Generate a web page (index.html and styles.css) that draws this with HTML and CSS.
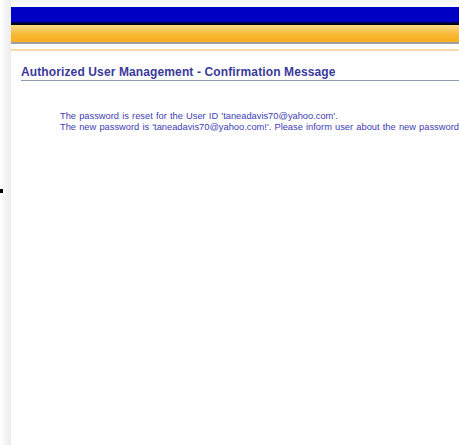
FILE: index.html
```html
<!DOCTYPE html>
<html>
<head>
<meta charset="utf-8">
<link rel="stylesheet" href="styles.css">
</head>
<body>
<div class="shade"></div>
<div class="frame">
  <div class="topgap"></div>
  <div class="bluebar"></div>
  <div class="blackline"></div>
  <div class="goldbar"></div>
  <div class="greyline"></div>
  <div class="paleline"></div>
  <div class="content">
    <h1 class="title">Authorized User Management - Confirmation Message</h1>
    <div class="message">
      <p>The password is reset for the User ID 'taneadavis70@yahoo.com'.</p>
      <p>The new password is 'taneadavis70@yahoo.com!'. Please inform user about the new password.</p>
    </div>
  </div>
</div>
<span class="mark"></span>
</body>
</html>
```
FILE: styles.css
```css
html, body {
  margin: 0;
  padding: 0;
  background: #fff;
  overflow: hidden;
  height: 445px;
}
body {
  display: flex;
  position: relative;
  font-family: "Liberation Sans", Arial, sans-serif;
}
.shade {
  width: 11px;
  flex: none;
  background: linear-gradient(to right, #ffffff, #ececec);
}
.frame {
  flex: 1;
  min-width: 0;
  display: flex;
  flex-direction: column;
}
.topgap {
  height: 7px;
  background: linear-gradient(to bottom, #f4f4f4, #ffffff);
}
.bluebar {
  height: 15px;
  background: #0000c4;
}
.blackline {
  height: 3px;
  background: linear-gradient(to bottom, #000060, #000000);
}
.goldbar {
  height: 17px;
  background: linear-gradient(to bottom, #fcd98a, #f7b730 60%, #f5b020);
}
.greyline {
  height: 2px;
  background: #a0a0a0;
}
.paleline {
  height: 2px;
  margin-top: 5px;
  background: #f4dca8;
}
.content {
  padding: 14px 0 0 10px;
}
.title {
  margin: 0;
  font-size: 12px;
  font-weight: bold;
  letter-spacing: 0.12px;
  color: #3a3a9a;
  padding-bottom: 1px;
  border-bottom: 1px solid #8f9aae;
  white-space: nowrap;
}
.message {
  padding: 30px 0 0 39px;
  color: #4040b4;
  font-size: 9.3px;
  line-height: 11px;
  word-spacing: 0.6px;
  white-space: nowrap;
}
.message p {
  margin: 0;
}
.mark {
  position: absolute;
  left: 0;
  top: 189px;
  width: 3px;
  height: 4px;
  background: #000;
}
```
